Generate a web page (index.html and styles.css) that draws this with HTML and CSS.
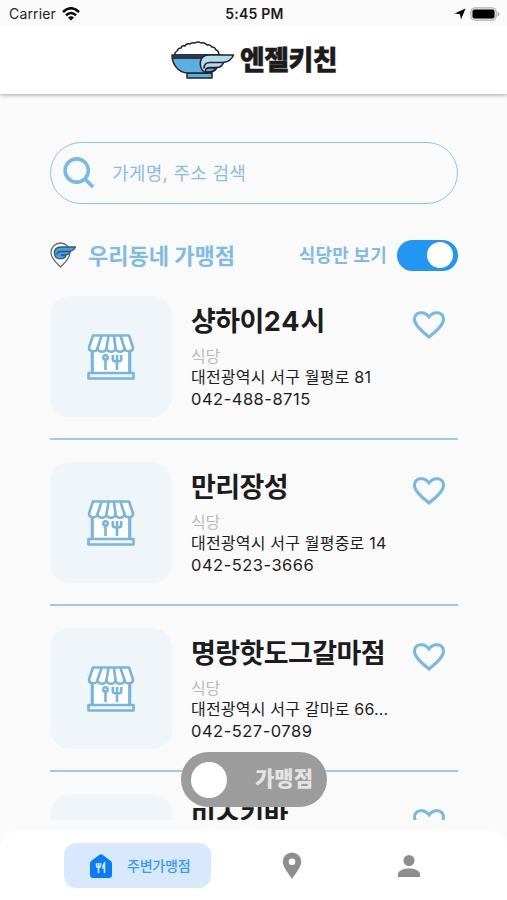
FILE: index.html
```html
<!DOCTYPE html>
<html lang="ko">
<head>
<meta charset="utf-8">
<title>엔젤키친</title>
<link rel="stylesheet" href="styles.css">
</head>
<body>
<svg class="defs" width="0" height="0" aria-hidden="true">
  <symbol id="store" viewBox="0 0 48 46">
    <path d="M5 14h38v26H5z" fill="#fff"/>
    <path d="M5.500 15v24M42.500 15v24" />
    <path d="M6 1.500h36l4 12c0 5-8.500 5-8.500.500 0 5-9 5-9 0 0 5-9 5-9 0 0 5-9 5-9 0 0 4.500-8.500 4.500-8.500-.500z" fill="#fff"/>
    <path d="M14.500 2l-4 12M21.500 2l-2 12M27 2l1.500 12M33.500 2l4 12"/>
    <path d="M1.500 39h45v5.500h-45z" fill="#f0f5f9"/>
    <path d="M18.500 24v12M30 24v12M25.800 21v4.500q0 2 4.200 2t4.200-2V21M30 21v6"/>
    <circle cx="18.500" cy="23.500" r="2.200"/>
  </symbol>
  <symbol id="heart" viewBox="0 0 32 28">
    <path d="M16 26C10 21 1.500 14.500 1.500 8.500 1.500 1 11 -1 16 6 21 -1 30.500 1 30.500 8.500 30.500 14.500 22 21 16 26z"/>
  </symbol>
</svg>
<div class="phone">
  <div class="status">
    <div class="carrier">Carrier
      <svg width="18" height="14" viewBox="0 0 18 14" fill="none" stroke="#000" stroke-width="2.500"><path d="M1 5Q9-2.500 17 5M4 8.200Q9 3.800 14 8.200"/><path d="M9 13.500L6 10.500Q9 8.200 12 10.500z" fill="#000" stroke="none"/></svg>
    </div>
    <div class="time">5:45 PM</div>
    <div class="power">
      <svg width="12" height="12" viewBox="0 0 12 12"><path d="M11.500.500L7 11.500 6 6.200.500 5.500z"/></svg>
      <svg width="30" height="14" viewBox="0 0 30 14"><rect x=".7" y=".7" width="25.600" height="12.600" rx="4" fill="#ddd" stroke="#b5b5b5"/><rect x="2.500" y="2.500" width="22" height="9" rx="2"/><path d="M27.500 4.500q2 .500 2 2.500t-2 2.500z" fill="#b5b5b5"/></svg>
    </div>
  </div>
  <header class="header">
    <svg class="bowl" width="64" height="39" viewBox="0 0 64 39" stroke="#222" stroke-width="1.500" stroke-linejoin="round">
      <path d="M4 14Q3 12 6 10 7 7 10 7 11 4 14 5 15 2 19 3 21 1 24 2 27 0 30 2 33 1 36 4 39 3 41 6 44 6 45 9 48 10 48 14z" fill="#fff"/>
      <path d="M16 32h25v5H16z" fill="#5daee3"/>
      <path d="M1 14h49c0 10-6 18-15 18H17C7 32 1 23 1 14z" fill="#5daee3"/>
      <path d="M2 14.500h34l-4 3.500H2z" fill="#253b4b" stroke="none"/>
      <path d="M33 31C27 25 28 14 38 14h24.500c-2 5-6 7-10 7.500-1 3-4 5-7 5 0 3-5 5-8 4z" fill="#b3daf3"/>
      <path d="M53 21.500H39q-6 0-6 6M46 26.500h-7q-5 0-4 4" fill="none"/>
      <path d="M35 31q-2-4 4-4h6q-1 3-7 4z" fill="#65aee0"/>
    </svg>
    <h1 class="brand">엔젤키친</h1>
  </header>

  <main class="content">
    <div class="search">
      <svg width="32" height="32" viewBox="0 0 32 32" fill="none" stroke="#78b9e7"><circle cx="13.700" cy="13.500" r="11.600" stroke-width="3.600"/><path d="M22 22l8 8" stroke-width="3.800"/></svg>
      <span>가게명, 주소 검색</span>
    </div>
    <div class="section">
      <svg width="27" height="26" viewBox="0 0 27 26" stroke="#6c6c68" stroke-width="1.300" stroke-linejoin="round"><path d="M10.500 25C7 21 1 17 1 10.500a9.500 9.500 0 0 1 19 0C20 17 14 21 10.500 25z" fill="#fff"/><path d="M6 15.500C2.500 10 5 5 11 5h14.500q-2 4-6 4.500 0 3-3.500 3.500 0 3-4 3.500-3 1-6-1z" fill="#4b9fdb" stroke="#2d5878"/><path d="M19.500 9.500H11q-4 0-4 3M16 13h-5" fill="none" stroke="#2d5878"/></svg>
      <h2>우리동네 가맹점</h2>
      <span class="only">식당만 보기</span>
      <span class="switch"><i></i></span>
    </div>
    <div class="list">
      <article class="card">
        <div class="thumb"><svg class="store"><use href="#store"/></svg></div>
        <div class="info"><h3>샹하이<span class="num">24</span>시</h3><p class="kind">식당</p><p>대전광역시 서구 월평로 81</p><p class="tel">042-488-8715</p></div>
        <svg class="heart"><use href="#heart"/></svg>
      </article>
      <article class="card">
        <div class="thumb"><svg class="store"><use href="#store"/></svg></div>
        <div class="info"><h3>만리장성</h3><p class="kind">식당</p><p>대전광역시 서구 월평중로 14</p><p class="tel">042-523-3666</p></div>
        <svg class="heart"><use href="#heart"/></svg>
      </article>
      <article class="card">
        <div class="thumb"><svg class="store"><use href="#store"/></svg></div>
        <div class="info"><h3>명랑핫도그갈마점</h3><p class="kind">식당</p><p>대전광역시 서구 갈마로 66...</p><p class="tel">042-527-0789</p></div>
        <svg class="heart"><use href="#heart"/></svg>
      </article>
      <article class="card">
        <div class="thumb"></div>
        <div class="info"><h3>미소김밥</h3></div>
        <svg class="heart"><use href="#heart"/></svg>
      </article>
    </div>
  </main>
  <div class="mode"><i></i><span>가맹점</span></div>
  <nav class="nav">
    <div class="tab active">
      <svg width="22" height="24" viewBox="0 0 22 24"><path d="M9.500.700q1.500-1 3 0l8 6Q22 8 22 9v12q0 3-3 3H3q-3 0-3-3V9q0-1 1.500-2.300z" fill="#087cff"/><path d="M8.500 9v10M6.500 9v3q0 1.500 2 1.500t2-1.500V9M14.500 19V9q-2 2-1.500 5h1.500" fill="none" stroke="#d9eaff" stroke-width="1.500"/></svg>
      <span>주변가맹점</span>
    </div>
    <div class="tab"><svg width="20" height="28" viewBox="0 0 20 28"><path fill-rule="evenodd" d="M10 27C7 22 .7 15 .7 9.700a9.300 9.300 0 0 1 18.600 0C19.300 15 13 22 10 27zm0-14a3.300 3.300 0 1 0 0-6.600 3.300 3.300 0 0 0 0 6.600z" fill="#8e8e8e"/></svg></div>
    <div class="tab"><svg width="22" height="22" viewBox="0 0 22 22" fill="#8e8e8e"><circle cx="11" cy="5.500" r="5.500"/><path d="M0 22v-3c0-3.500 6-5.500 11-5.500s11 2 11 5.500v3z"/></svg></div>
  </nav>
</div>
</body>
</html>
```

FILE: styles.css
```css
* { box-sizing: border-box; }
body { margin: 0; font-family: Inter, "Noto Sans CJK KR", sans-serif; color: #1c1c1c; }
h1, h2, h3, p { margin: 0; }
svg { display: block; flex: none; }
.defs { position: absolute; }
.phone { position: relative; display: flex; flex-direction: column; width: 507px; height: 900px; overflow: hidden; background: #fafafa; }
.status { display: grid; grid-template-columns: 1fr auto 1fr; align-items: center; height: 26px; padding: 1px 7px 0 9px; font-size: 14px; line-height: 24px; }
.carrier { display: flex; align-items: center; gap: 6px; color: #222; letter-spacing: .15px; }
.time { font-weight: 600; font-size: 14px; letter-spacing: .2px; }
.power { display: flex; align-items: center; justify-content: flex-end; gap: 4px; }
.header { display: flex; flex: none; align-items: center; height: 68px; padding-left: 171px; gap: 5px; background: #fff; box-shadow: 0 1px 4px rgba(0,0,0,.35); clip-path: inset(0 0 -8px 0); }
.brand { padding-top: 2px; font-size: 27px; line-height: 36px; font-weight: 900; letter-spacing: -.6px; -webkit-text-stroke: .4px #1c1918; }
.content { display: flex; flex: none; flex-direction: column; height: 726px; padding: 48px 49px 0 50px; }
.search { display: flex; flex: none; align-items: center; gap: 17px; height: 62px; padding: 0 12px; border: 1px solid #8dc4eb; border-radius: 31px; color: #86beea; font-size: 18px; letter-spacing: .3px; }
.search span { padding-bottom: 3px; }
.search svg { margin-bottom: 0; }
.section { display: flex; flex: none; align-items: center; height: 40px; margin-top: 31px; color: #7ebbe8; }
.section h2 { margin-left: 11px; padding-bottom: 3px; font-size: 22px; font-weight: 700; letter-spacing: 0; }
.only { margin-left: auto; padding-bottom: 3px; font-size: 18px; font-weight: 700; letter-spacing: .2px; }
.switch { display: flex; align-items: center; justify-content: flex-end; width: 61px; height: 31px; margin-left: 10px; padding-right: 5px; border-radius: 16px; background: #2196f3; }
.switch i { width: 26px; height: 26px; border-radius: 50%; background: #fff; }
.list { flex: none; height: 524px; margin-top: 21px; overflow: hidden; }
.card { display: flex; height: 144px; margin-bottom: 22px; border-bottom: 2px solid #9ccbea; }
.thumb { display: grid; flex: none; place-items: center; width: 122px; height: 121px; border-radius: 20px; background: #f0f5f9; }
.store { width: 48px; height: 46px; fill: none; stroke: #78b4e0; stroke-width: 2.6; stroke-linejoin: round; }
.info { flex: 1; padding: 10px 0 0 19px; white-space: nowrap; }
.info h3 { height: 32px; margin-bottom: 7px; font-size: 27px; line-height: 32px; font-weight: 700; letter-spacing: -.6px; }
.num { letter-spacing: .9px; }
.info p { height: 22px; font-size: 16px; line-height: 22px; letter-spacing: .2px; }
.info .kind { height: 21px; color: #bbb; letter-spacing: -.3px; }
.info .tel { font-size: 16.5px; letter-spacing: .5px; }
.heart { width: 32px; height: 28px; margin: 15px 13px 0 0; fill: none; stroke: #78b9e3; stroke-width: 3; overflow: visible; }
.mode { position: absolute; left: 181px; top: 752px; display: flex; align-items: center; width: 146px; height: 55px; padding: 0 14px 0 10px; justify-content: space-between; border-radius: 28px; background: #9c9c9c; color: #e3e3e3; font-size: 21px; font-weight: 900; letter-spacing: 0; }
.mode span { padding-bottom: 5px; }
.mode i { width: 36px; height: 36px; border-radius: 50%; background: #fff; }
.nav { display: grid; flex: none; grid-template-columns: 147px 162px 71px; align-items: center; height: 69px; margin-top: 11px; padding-left: 64px; border-radius: 20px 20px 0 0; background: #fff; box-shadow: 0 0 8px #fff; }
.tab { display: grid; place-items: center; }
.tab.active { display: flex; justify-content: flex-start; gap: 15px; height: 45px; padding-left: 26px; border-radius: 12px; background: #d9e9fd; color: #329bff; font-size: 14px; font-weight: 500; }
.tab.active span { padding-bottom: 2px; letter-spacing: -.2px; }
```
